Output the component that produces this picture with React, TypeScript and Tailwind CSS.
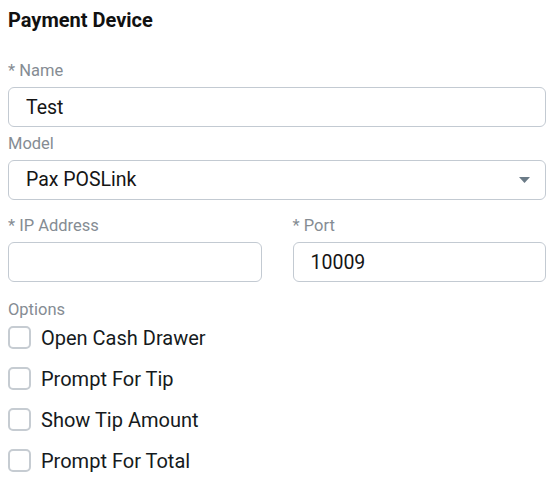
import React from "react";

const Label = ({ children, className = "" }: { children: React.ReactNode; className?: string }) => (
  <div className={`text-[16.5px] leading-[20px] text-[#858c93] ${className}`}>{children}</div>
);

const inputCls =
  "h-[40px] w-full rounded-[6px] border border-[#c3cad2] bg-white px-[17px] text-[19.5px] text-[#151515] outline-none";

const Check = ({ label, className = "" }: { label: string; className?: string }) => (
  <label className={`flex h-[24px] items-center gap-[10px] ${className}`}>
    <span className="block h-[23px] w-[23px] rounded-[5px] border-2 border-[#c6ccd2] bg-white" />
    <span className="pt-[2px] text-[20px] leading-[22px] text-[#151a20]">{label}</span>
  </label>
);

export default function App() {
  return (
    <div
      className="min-h-[484px] w-[553px] bg-white pl-[8px] pr-[7px] pt-[8px]"
      style={{ fontFamily: "Roboto, 'Noto Sans', sans-serif" }}
    >
      <div className="text-[20px] font-bold leading-[24px] text-[#111]">Payment Device</div>

      <Label className="mt-[29px]">* Name</Label>
      <input className={`${inputCls} mt-[6px]`} defaultValue="Test" />

      <Label className="mt-[7px]">Model</Label>
      <div className={`${inputCls} mt-[6px] flex items-center justify-between pr-[15px]`}>
        <span>Pax POSLink</span>
        <svg width="11" height="6" viewBox="0 0 11 6">
          <path d="M0 0 L11 0 L5.5 6 Z" fill="#6b7b87" />
        </svg>
      </div>

      <div className="mt-[16px] grid grid-cols-2 gap-[31px]">
        <div>
          <Label>* IP Address</Label>
          <input className={`${inputCls} mt-[6px]`} defaultValue="" />
        </div>
        <div>
          <Label>* Port</Label>
          <input className={`${inputCls} mt-[6px]`} defaultValue="10009" />
        </div>
      </div>

      <Label className="mt-[18px]">Options</Label>
      <div className="mt-[5px] flex flex-col gap-[17px]">
        <Check label="Open Cash Drawer" />
        <Check label="Prompt For Tip" />
        <Check label="Show Tip Amount" />
        <Check label="Prompt For Total" />
      </div>
    </div>
  );
}
